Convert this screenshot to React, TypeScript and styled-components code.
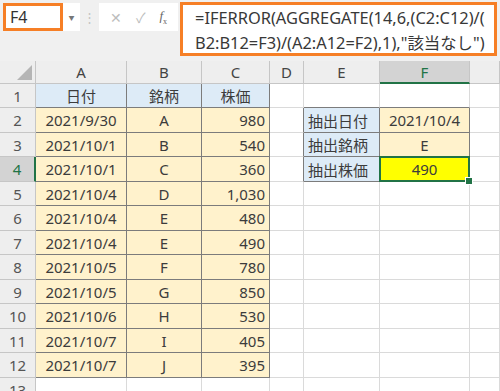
import styled, { createGlobalStyle } from "styled-components";

const GlobalStyle = createGlobalStyle`
    html, body {
        margin: 0;
        padding: 0;
        background: #ffffff;
        overflow: hidden;
    }
    body {
        font-family: "Noto Sans", "Noto Sans CJK JP", sans-serif;
        color: #3a3a3a;
    }
`;

const ORANGE = "#f67f26";
const GREEN = "#217346";
const FRAME = "#7c7c7c";
const GRID = "#dadada";
const HEAD_LINE = "#c6c6c6";

const Sheet = styled.div`
    width: 500px;
    height: 391px;
    overflow: hidden;
    background: #ffffff;
`;

const TopBar = styled.div`
    height: 61px;
    background: #f0f0f0;
    display: flex;
    align-items: flex-start;
    padding: 2px 0 0 3px;
    box-sizing: border-box;
`;

const NameBox = styled.div`
    margin-top: 1px;
    width: 77px;
    height: 28px;
    background: #ffffff;
    display: flex;
`;

const NameField = styled.div`
    width: 60px;
    height: 28px;
    box-sizing: border-box;
    border: 3px solid ${ORANGE};
    font-size: 16px;
    line-height: 22px;
    padding-left: 4px;
    color: #333;
`;

const DropArrow = styled.div`
    flex: 1;
    display: flex;
    align-items: center;
    justify-content: center;
    font-size: 6px;
    color: #777;
`;

const Dots = styled.div`
    width: 19px;
    height: 28px;
    margin-top: 1px;
    display: flex;
    align-items: center;
    justify-content: center;
    color: #c4c4c4;
    font-size: 13px;
`;

const FxBox = styled.div`
    margin-top: 1px;
    width: 79px;
    height: 28px;
    background: #ffffff;
    display: flex;
    align-items: center;
    justify-content: space-around;
    padding: 0 4px;
    box-sizing: border-box;
    color: #bdbdbd;
    font-size: 14px;
`;

const FxGlyph = styled.span`
    font-family: "Liberation Serif", serif;
    font-style: italic;
    font-size: 13px;
    color: #666;
    sub {
        font-size: 8px;
        font-style: normal;
    }
`;

const FormulaBox = styled.div`
    margin-left: 2px;
    width: 317px;
    height: 54px;
    box-sizing: border-box;
    border: 3px solid ${ORANGE};
    background: #ffffff;
    padding: 0 0 0 12px;
    font-size: 16.4px;
    line-height: 25px;
    color: #383838;
    white-space: nowrap;
    overflow: hidden;
`;

const Grid = styled.div`
    display: grid;
    grid-template-columns: 36px 91px 75px 68px 34px 76px 90px 1fr;
    grid-template-rows: 23px repeat(6, 24px 25px) 24px;
`;

const Corner = styled.div`
    background: #eeeeee;
    border-right: 1px solid ${HEAD_LINE};
    border-bottom: 1px solid ${HEAD_LINE};
    display: flex;
    align-items: flex-end;
    justify-content: flex-end;
    padding: 0 3px 3px 0;
`;

const CornerMark = styled.div`
    width: 0;
    height: 0;
    border-left: 15px solid transparent;
    border-bottom: 15px solid #b5b5b5;
`;

const ColHead = styled.div<{ $active?: boolean }>`
    background: ${(p) => (p.$active ? "#d3d3d3" : "#eeeeee")};
    border-right: 1px solid ${HEAD_LINE};
    border-bottom: ${(p) => (p.$active ? `2px solid ${GREEN}` : `1px solid ${HEAD_LINE}`)};
    color: ${(p) => (p.$active ? GREEN : "#444")};
    font-size: 15px;
    display: flex;
    align-items: center;
    justify-content: center;
`;

const RowHead = styled.div<{ $active?: boolean }>`
    background: ${(p) => (p.$active ? "#d3d3d3" : "#eeeeee")};
    border-right: ${(p) => (p.$active ? `2px solid ${GREEN}` : `1px solid ${HEAD_LINE}`)};
    border-bottom: 1px solid ${HEAD_LINE};
    color: ${(p) => (p.$active ? GREEN : "#555")};
    font-size: 15px;
    display: flex;
    align-items: center;
    justify-content: center;
    overflow: hidden;
`;

const Cell = styled.div<{
    $bg: string;
    $align: "left" | "center" | "right";
    $r: string;
    $b: string;
    $selected?: boolean;
}>`
    position: relative;
    background: ${(p) => p.$bg};
    border-right: 1px solid ${(p) => p.$r};
    border-bottom: 1px solid ${(p) => p.$b};
    display: flex;
    align-items: center;
    justify-content: ${(p) =>
        p.$align === "left" ? "flex-start" : p.$align === "right" ? "flex-end" : "center"};
    padding: 0 4px;
    font-size: 15px;
    color: #3c3c3c;
    white-space: nowrap;
    overflow: visible;
    ${(p) =>
        p.$selected &&
        `
        &::after {
            content: "";
            position: absolute;
            left: -1px;
            top: -1px;
            right: -1px;
            bottom: -1px;
            border: 2px solid ${GREEN};
        }
        &::before {
            content: "";
            position: absolute;
            right: -4px;
            bottom: -4px;
            width: 6px;
            height: 6px;
            background: ${GREEN};
            border: 1px solid #ffffff;
            z-index: 2;
        }
    `}
`;

type Align = "left" | "center" | "right";
type CellData = { text: string; bg: string; align: Align; selected?: boolean };

const BLUE = "#ddebf7";
const CREAM = "#fff2cc";
const YELLOW = "#ffff00";

const stock: [string, string, string][] = [
    ["2021/9/30", "A", "980"],
    ["2021/10/1", "B", "540"],
    ["2021/10/1", "C", "360"],
    ["2021/10/4", "D", "1,030"],
    ["2021/10/4", "E", "480"],
    ["2021/10/4", "E", "490"],
    ["2021/10/5", "F", "780"],
    ["2021/10/5", "G", "850"],
    ["2021/10/6", "H", "530"],
    ["2021/10/7", "I", "405"],
    ["2021/10/7", "J", "395"],
];

const lookup: Record<number, [string, string]> = {
    2: ["抽出日付", "2021/10/4"],
    3: ["抽出銘柄", "E"],
    4: ["抽出株価", "490"],
};

// G is only partly on screen, its letter falls outside the window
const COLS = ["A", "B", "C", "D", "E", "F", ""];
const ROWS = 13;

const framed = (r: number, c: number) =>
    (c >= 0 && c <= 2 && r >= 1 && r <= 12) || (c >= 4 && c <= 5 && r >= 2 && r <= 4);

const cellAt = (r: number, c: number): CellData => {
    const empty: CellData = { text: "", bg: "#ffffff", align: "center" };
    if (r === 1 && c <= 2) return { text: ["日付", "銘柄", "株価"][c], bg: BLUE, align: "center" };
    if (r >= 2 && r <= 12 && c <= 2) {
        const row = stock[r - 2];
        return { text: row[c], bg: CREAM, align: c === 2 ? "right" : "center" };
    }
    if (lookup[r] && c === 4) return { text: lookup[r][0], bg: BLUE, align: "left" };
    if (lookup[r] && c === 5)
        return {
            text: lookup[r][1],
            bg: r === 4 ? YELLOW : CREAM,
            align: "center",
            selected: r === 4,
        };
    return empty;
};

export default function App() {
    const body = [];
    for (let r = 1; r <= ROWS; r++) {
        body.push(
            <RowHead key={`h${r}`} $active={r === 4}>
                {r}
            </RowHead>
        );
        COLS.forEach((_, c) => {
            const d = cellAt(r, c);
            const right = framed(r, c) || framed(r, c + 1) ? FRAME : GRID;
            const bottom = framed(r, c) || framed(r + 1, c) ? FRAME : GRID;
            body.push(
                <Cell
                    key={`${r}-${c}`}
                    $bg={d.bg}
                    $align={d.align}
                    $r={right}
                    $b={bottom}
                    $selected={d.selected}
                >
                    {d.text}
                </Cell>
            );
        });
    }

    return (
        <Sheet>
            <GlobalStyle />
            <TopBar>
                <NameBox>
                    <NameField>F4</NameField>
                    <DropArrow>▼</DropArrow>
                </NameBox>
                <Dots>⋮</Dots>
                <FxBox>
                    <span>✕</span>
                    <span>✓</span>
                    <FxGlyph>
                        f<sub>x</sub>
                    </FxGlyph>
                </FxBox>
                <FormulaBox>
                    =IFERROR(AGGREGATE(14,6,(C2:C12)/(
                    <br />
                    B2:B12=F3)/(A2:A12=F2),1),"該当なし")
                </FormulaBox>
            </TopBar>
            <Grid>
                <Corner>
                    <CornerMark />
                </Corner>
                {COLS.map((col, i) => (
                    <ColHead key={i} $active={col === "F"}>
                        {col}
                    </ColHead>
                ))}
                {body}
            </Grid>
        </Sheet>
    );
}
